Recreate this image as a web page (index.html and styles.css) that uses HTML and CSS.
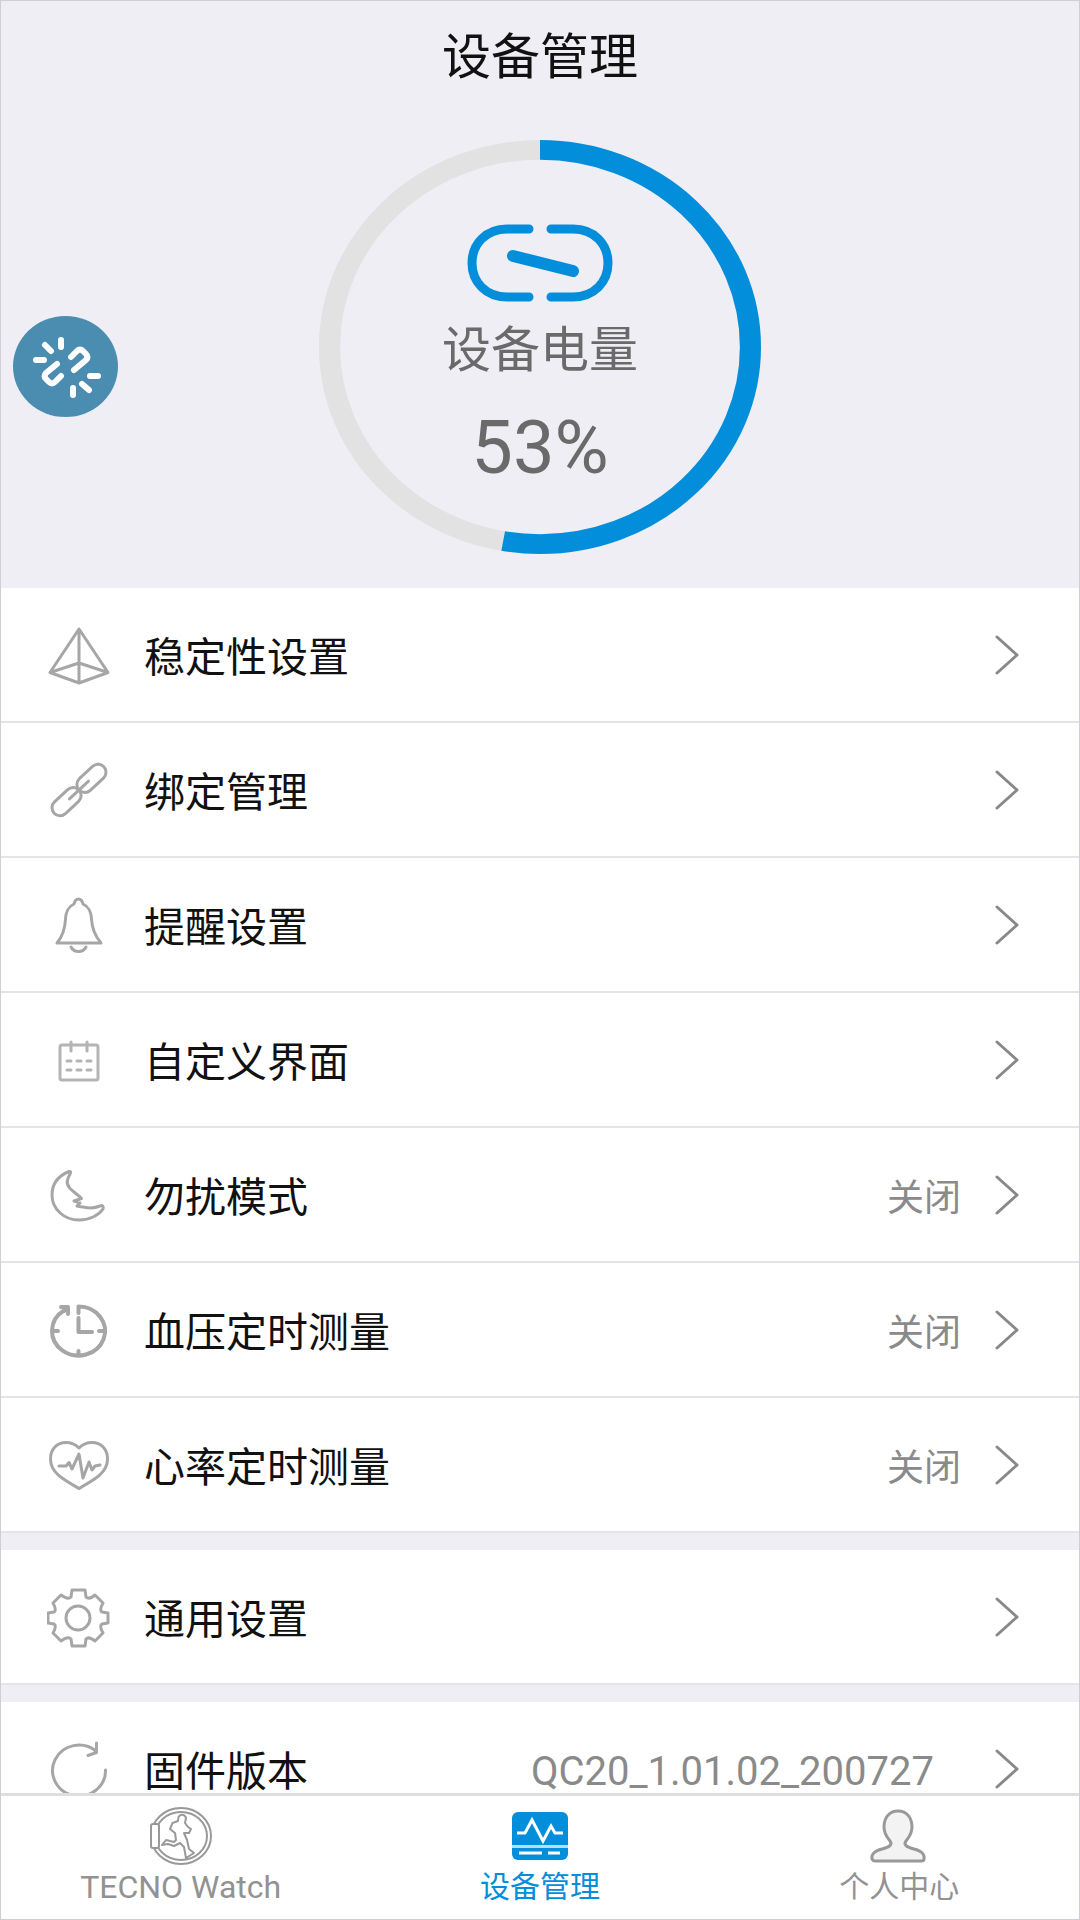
FILE: index.html
```html
<!DOCTYPE html>
<html lang="zh-CN">
<head>
  <meta charset="UTF-8">
  <meta name="viewport" content="width=device-width, initial-scale=1.0">
  <title>设备管理</title>
  <link rel="stylesheet" href="styles.css">
</head>
<body>
  <header class="device-header">
    <h1>设备管理</h1>
    <div class="battery">
      <svg class="battery-ring" viewBox="0 0 440 440" preserveAspectRatio="none" aria-hidden="true">
        <circle class="ring-track" cx="220" cy="220" r="209.5"/>
        <circle class="ring-value" cx="220" cy="220" r="209.5" pathLength="100" stroke-dasharray="52.8 100" transform="rotate(-90 220 220)"/>
      </svg>
      <div class="battery-info">
        <svg class="link-icon" viewBox="0 0 148 80" aria-hidden="true">
          <path d="M63 6H41C20 6 6 21 6 40S20 74 41 74H63"/>
          <path d="M85 6H107C128 6 142 21 142 40S128 74 107 74H85"/>
          <path class="link-bar" d="M47 33L107 48"/>
        </svg>
        <span class="battery-label">设备电量</span>
        <span class="battery-percent">53%</span>
      </div>
    </div>
    <button class="unbind" type="button" aria-label="解除绑定">
      <svg viewBox="0 0 105 101" aria-hidden="true">
        <path d="M48 24V31M32 29L38 35M23 44H31M77 60H85M69 68L76 74M60 72V79"/>
        <path d="M58 41L64 35Q67 32 70 35L73 38Q76 41 73 44L61 54"/>
        <path d="M44 48L33 57Q30 60 33 63L36 66Q39 69 42 66L48 60"/>
      </svg>
    </button>
  </header>

  <main class="settings">
    <ul class="group">
      <li><a class="row" href="#stability">
        <svg class="row-icon" viewBox="0 0 64 64" aria-hidden="true"><path d="M32 6L3 49.5L32 60L61 49.5ZM32 6V60M3 49.5L32 40L61 49.5"/></svg>
        <span class="row-label">稳定性设置</span>
        <svg class="chevron" viewBox="0 0 24 40" aria-hidden="true"><path d="M2 2L22 20L2 38"/></svg>
      </a></li>
      <li><a class="row" href="#bind">
        <svg class="row-icon" viewBox="0 0 64 64" aria-hidden="true">
          <g transform="translate(32 32) rotate(-43)">
            <rect x="0" y="-8" width="34" height="16" rx="8"/>
            <rect x="-34" y="-8" width="34" height="16" rx="8"/>
            <path d="M-13 0H13"/>
          </g>
        </svg>
        <span class="row-label">绑定管理</span>
        <svg class="chevron" viewBox="0 0 24 40" aria-hidden="true"><path d="M2 2L22 20L2 38"/></svg>
      </a></li>
      <li><a class="row" href="#remind">
        <svg class="row-icon" viewBox="0 0 64 64" aria-hidden="true"><path d="M10 50C16 43 18 36 18.500 26C19 16 23 13 27 11C28 7 30 6 31.500 6C33 6 35 7 36 11C40 13 44 16 44.500 26C45 36 48 43 54 50ZM24 54C27 60 36 60 39 54"/></svg>
        <span class="row-label">提醒设置</span>
        <svg class="chevron" viewBox="0 0 24 40" aria-hidden="true"><path d="M2 2L22 20L2 38"/></svg>
      </a></li>
      <li><a class="row" href="#custom">
        <svg class="row-icon row-icon-light" viewBox="0 0 64 64" aria-hidden="true">
          <rect x="13" y="17" width="38" height="35" rx="2"/>
          <path d="M24 14V23M40 14V23M20 33H24M30 33H34M40 33H44M20 42H24M30 42H34M40 42H44"/>
        </svg>
        <span class="row-label">自定义界面</span>
        <svg class="chevron" viewBox="0 0 24 40" aria-hidden="true"><path d="M2 2L22 20L2 38"/></svg>
      </a></li>
      <li><a class="row" href="#dnd">
        <svg class="row-icon" viewBox="0 0 64 64" aria-hidden="true"><path d="M22 8.500C11 13 5 21 5 32C5 46 17 57 32 57C43 57 52 52 56 46C57 43 55 42 53 43C46 46 40 45 30 43L33 40L27 38L34.500 35.500C30 30 18 25 20.500 17C21 14 23 12 23.500 10Q24 8 22 8.500Z"/></svg>
        <span class="row-label">勿扰模式</span>
        <span class="row-value">关闭</span>
        <svg class="chevron" viewBox="0 0 24 40" aria-hidden="true"><path d="M2 2L22 20L2 38"/></svg>
      </a></li>
      <li><a class="row" href="#blood-pressure">
        <svg class="row-icon row-icon-bold" viewBox="0 0 64 64" aria-hidden="true">
          <path d="M31.500 15V8.500A26.500 24.500 0 1 1 17 12.500M14 9H21V16M21 9L17 13M6 33H11M52 33H57M31.500 57V53M31.500 20V34H45"/>
        </svg>
        <span class="row-label">血压定时测量</span>
        <span class="row-value">关闭</span>
        <svg class="chevron" viewBox="0 0 24 40" aria-hidden="true"><path d="M2 2L22 20L2 38"/></svg>
      </a></li>
      <li><a class="row" href="#heart-rate">
        <svg class="row-icon" viewBox="0 0 64 64" aria-hidden="true">
          <path d="M32 15C28 11 23 9.500 19 9.500C10 9.500 3.500 16 3.500 26C3.500 40 17 47 32 55.500C47 47 60.500 40 60.500 26C60.500 16 54 9.500 45 9.500C41 9.500 36 11 32 15Z"/>
          <path d="M12 33H19L22 29.500L25 36L32 21L36 45L42 29L45 37L48 33L53 32"/>
        </svg>
        <span class="row-label">心率定时测量</span>
        <span class="row-value">关闭</span>
        <svg class="chevron" viewBox="0 0 24 40" aria-hidden="true"><path d="M2 2L22 20L2 38"/></svg>
      </a></li>
    </ul>

    <ul class="group">
      <li><a class="row" href="#general">
        <svg class="row-icon" viewBox="0 0 64 64" aria-hidden="true">
          <path d="M25 5H38L39 12Q42 15 48 10L56 18Q52 25 55 27L61 28V38L55 39Q52 41 56 48L48 56Q42 51 39 54L38 61H25L24 54Q21 51 14 56L6 48Q10 41 7 39L1 38V28L7 27Q10 25 6 18L14 10Q21 15 24 12Z"/>
          <circle cx="31" cy="33" r="12"/>
        </svg>
        <span class="row-label">通用设置</span>
        <svg class="chevron" viewBox="0 0 24 40" aria-hidden="true"><path d="M2 2L22 20L2 38"/></svg>
      </a></li>
    </ul>

    <ul class="group">
      <li><a class="row" href="#firmware">
        <svg class="row-icon" viewBox="0 0 64 64" aria-hidden="true"><path d="M58.500 33A26.500 25.500 0 1 1 49 14M49.500 6V15.500L41 18.500"/></svg>
        <span class="row-label">固件版本</span>
        <span class="row-value row-version">QC20_1.01.02_200727</span>
        <svg class="chevron" viewBox="0 0 24 40" aria-hidden="true"><path d="M2 2L22 20L2 38"/></svg>
      </a></li>
    </ul>
  </main>

  <nav class="tabbar">
    <a class="tab" href="#watch">
      <svg class="tab-icon" viewBox="0 0 64 60" aria-hidden="true">
        <ellipse cx="32" cy="30" rx="30" ry="28"/>
        <ellipse cx="32" cy="30" rx="26" ry="24"/>
        <rect class="strap" x="2" y="18" width="8" height="24" rx="2"/>
        <path d="M29.500 11C31 8 36 8 37 12L36 17L39 21L42 23L40 27L35 27L38 34L40 43L45 47L37 52L35 41L31 37L25 40L19 38L13 39L17 34L25 36L27 34L26 27L21 23L23.500 17L29 15Z"/>
      </svg>
      <span class="tab-label" lang="en">TECNO Watch</span>
    </a>
    <a class="tab active" href="#device" aria-current="page">
      <svg class="tab-icon" viewBox="0 0 64 60" aria-hidden="true">
        <rect class="device-body" x="4" y="6" width="56" height="48" rx="6"/>
        <path class="device-split" d="M4 40.500H60"/>
        <path class="device-line" d="M9 27H17L24 14L35 35L43 20L47 27H55M11 47H34M40 47H52"/>
      </svg>
      <span class="tab-label">设备管理</span>
    </a>
    <a class="tab" href="#me">
      <svg class="tab-icon" viewBox="0 0 64 60" aria-hidden="true">
        <path class="person" d="M31 5C22 5 17 12 17 21C17 28 20 31 23 35C26 39 22 41 15 43C7 45 4 49 5 53Q6 55 8 55H54Q57 55 57 53C58 49 55 45 47 43C40 41 36 39 39 35C42 31 45 28 45 21C45 12 40 5 31 5Z"/>
      </svg>
      <span class="tab-label">个人中心</span>
    </a>
  </nav>
</body>
</html>
```

FILE: styles.css
```css
* {
  box-sizing: border-box;
}
body {
  display: flex;
  flex-direction: column;
  height: 100vh;
  margin: 0;
  border: 1px solid #cfced4;
  background-color: #eeeef4;
  font-family: Roboto, 'Noto Sans CJK SC', sans-serif;
  color: #111;
}
a {
  color: inherit;
  text-decoration: none;
}
svg {
  display: block;
  flex: none;
  fill: none;
  stroke-linecap: round;
  stroke-linejoin: round;
}

/* header */
.device-header {
  position: relative;
  flex: none;
  display: flex;
  flex-direction: column;
  align-items: center;
  padding-bottom: 34px;
}
h1 {
  margin: 0 0 26px;
  font-size: 49px;
  font-weight: 400;
  line-height: 113px;
}
.battery {
  display: grid;
  justify-items: center;
}
.battery-ring,
.battery-info {
  grid-area: 1 / 1;
}
.battery-ring {
  width: 442px;
  height: 414px;
  stroke-width: 21;
}
.battery-ring circle {
  stroke-linecap: butt;
}
.ring-track {
  stroke: #e2e2e3;
}
.ring-value {
  stroke: #038edb;
}
.battery-info {
  display: flex;
  flex-direction: column;
  align-items: center;
  padding-top: 83px;
  color: #6a6a6a;
}
.link-icon {
  width: 148px;
  height: 80px;
  stroke: #038edb;
  stroke-width: 9;
}
.link-bar {
  stroke-width: 12;
}
.battery-label {
  font-size: 49px;
  line-height: 96px;
}
.battery-percent {
  font-size: 74px;
  line-height: 98px;
}
.unbind {
  position: absolute;
  top: 315px;
  left: 12px;
  width: 105px;
  height: 101px;
  padding: 0;
  border: none;
  border-radius: 50%;
  background-color: #4b8db1;
  cursor: pointer;
}
.unbind svg {
  stroke: white;
  stroke-width: 6;
}

/* settings list */
.settings {
  flex: 1;
  min-height: 0;
  overflow: hidden;
}
.group {
  margin: 0 0 17px;
  padding: 0;
  list-style: none;
  background-color: white;
}
.row {
  display: flex;
  align-items: center;
  height: 135px;
  padding: 0 60px 0 46px;
  border-bottom: 2px solid #e4e4e6;
}
.row-icon {
  width: 64px;
  height: 64px;
  margin-right: 33px;
  stroke: #a6a6a6;
  stroke-width: 3;
}
.row-icon-light {
  stroke: #b4b4b4;
}
.row-icon-bold {
  stroke-width: 4;
}
.row-label {
  flex: 1;
  padding-top: 7px;
  font-size: 41px;
  line-height: 42px;
}
.row-value {
  margin-right: 34px;
  font-size: 37px;
  color: #8a8a8a;
}
.row-version {
  margin-right: 61px;
  padding-top: 6px;
  font-size: 40px;
  line-height: 42px;
}
.chevron {
  width: 24px;
  height: 40px;
  stroke: #888;
  stroke-width: 3;
}

/* bottom tabs */
.tabbar {
  flex: none;
  display: flex;
  padding: 10px 0 11px;
  border-top: 3px solid #dedee0;
  background-color: white;
}
.tab {
  flex: 1;
  display: flex;
  flex-direction: column;
  align-items: center;
  color: #929292;
}
.tab.active {
  color: #038edb;
}
.tab-icon {
  width: 64px;
  height: 60px;
  stroke: #999;
  stroke-width: 2;
}
.strap {
  fill: white;
}
.device-body {
  fill: #038edb;
  stroke: none;
}
.device-split {
  stroke: #b5e0f7;
  stroke-width: 3;
  stroke-linecap: butt;
}
.device-line {
  stroke: white;
  stroke-width: 3;
  stroke-linecap: butt;
  stroke-linejoin: miter;
}
.person {
  fill: #f3f3f3;
  stroke-width: 3;
}
.tab-label {
  font-size: 30px;
  line-height: 42px;
}
.tab-label:lang(en) {
  font-size: 32px;
}
```
